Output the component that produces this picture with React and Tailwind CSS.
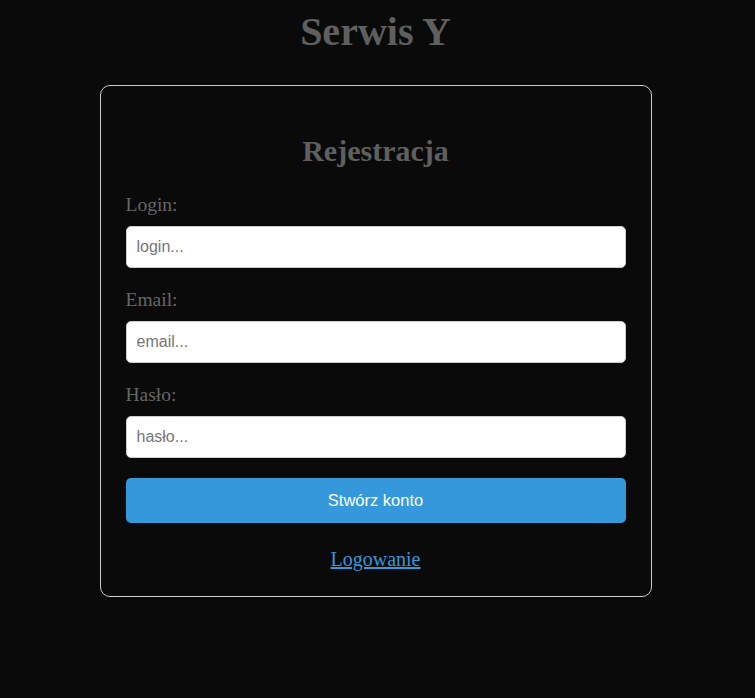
export default function App() {
  const serif = { fontFamily: '"Liberation Serif", "Times New Roman", serif' };
  const sans = { fontFamily: '"Liberation Sans", Arial, sans-serif' };
  const fields = [
    { label: "Login:", ph: "login..." },
    { label: "Email:", ph: "email..." },
    { label: "Hasło:", ph: "hasło..." },
  ];
  return (
    <div className="min-h-[698px] w-full bg-[#0a0a0a] pt-[9px]" style={serif}>
      <div className="w-[751px]">
        <h1 className="text-center text-[40px] font-bold leading-[46px] text-[#5f5f5f]">Serwis Y</h1>
        <div className="mx-auto mt-[30px] w-[552px] rounded-[10px] border border-[#cccccc] bg-[#0a0a0a] px-[25px] pb-[24px] pt-[48px]">
          <h2 className="text-center text-[30px] font-bold leading-[34px] text-[#5f5f5f]">Rejestracja</h2>
          <div className="mt-[26px] flex flex-col">
            {fields.map((f, i) => (
              <div key={f.label} className={i === 0 ? "flex flex-col" : "mt-[21px] flex flex-col"}>
                <label className="text-[19.5px] leading-[22px] text-[#666666]">{f.label}</label>
                <input
                  type="text"
                  placeholder={f.ph}
                  className="mt-[10px] h-[42px] w-full rounded-[5px] border border-[#cccccc] bg-white px-[10px] text-[16px] text-black placeholder:text-[#757575] outline-none"
                  style={sans}
                />
              </div>
            ))}
            <button
              className="mt-[20px] h-[45px] w-full rounded-[5px] bg-[#3498db] text-[16.5px] text-white"
              style={sans}
            >
              Stwórz konto
            </button>
            <div className="mt-[25px] text-center leading-[23px]">
              <a href="#" className="text-[20px] text-[#3498db] underline">Logowanie</a>
            </div>
          </div>
        </div>
      </div>
    </div>
  );
}
